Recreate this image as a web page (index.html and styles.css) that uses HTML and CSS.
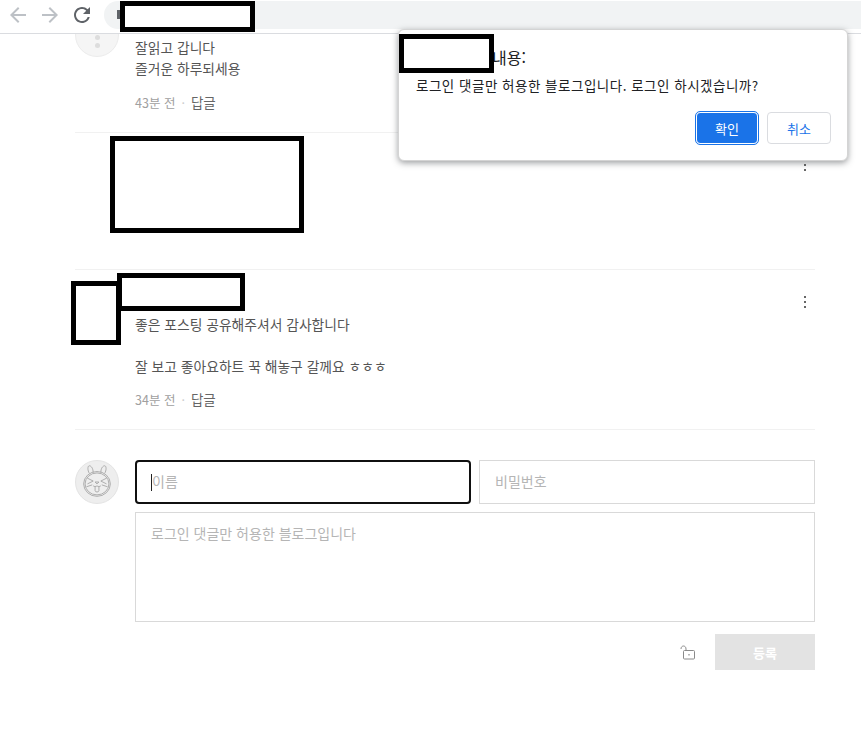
FILE: index.html
```html
<!DOCTYPE html>
<html lang="ko">
<head>
  <meta charset="UTF-8" />
  <title>댓글</title>
  <link rel="stylesheet" href="styles.css">
</head>
<body>
  <header class="toolbar">
    <svg class="nav-icon off" viewBox="0 0 24 24"><path d="M20 11H7.83l5.59-5.59L12 4l-8 8 8 8 1.41-1.41L7.83 13H20v-2z"/></svg>
    <svg class="nav-icon off" viewBox="0 0 24 24"><path d="M4 11h12.17l-5.59-5.59L12 4l8 8-8 8-1.41-1.41L16.17 13H4v-2z"/></svg>
    <svg class="nav-icon" viewBox="0 0 24 24"><path d="M17.65 6.35A7.958 7.958 0 0 0 12 4c-4.42 0-7.99 3.58-7.99 8s3.57 8 7.99 8c3.73 0 6.84-2.55 7.73-6h-2.08A5.99 5.99 0 0 1 12 18c-3.31 0-6-2.69-6-6s2.69-6 6-6c1.66 0 3.14.69 4.22 1.78L13 11h7V4l-2.35 2.35z"/></svg>
    <div class="omnibox"><span class="lock-stub"></span></div>
  </header>

  <main class="page">
    <ul class="comments">
      <li class="comment comment-first">
        <div class="avatar">
          <span class="avatar-dot"></span>
          <span class="avatar-dot"></span>
        </div>
        <div class="comment-body">
          <div class="name"></div>
          <p>잘읽고 갑니다<br>즐거운 하루되세용</p>
          <div class="meta">43분 전<i>·</i><a>답글</a></div>
        </div>
      </li>
      <li class="comment comment-hidden">
        <div class="comment-body"></div>
        <svg class="kebab" viewBox="0 0 4 14"><circle cx="2" cy="2" r="1"/><circle cx="2" cy="7" r="1"/><circle cx="2" cy="12" r="1"/></svg>
      </li>
      <li class="comment">
        <div class="avatar"></div>
        <div class="comment-body">
          <div class="name"></div>
          <p>좋은 포스팅 공유해주셔서 감사합니다<br><br>잘 보고 좋아요하트 꾹 해놓구 갈께요 ㅎㅎㅎ</p>
          <div class="meta">34분 전<i>·</i><a>답글</a></div>
        </div>
        <svg class="kebab" viewBox="0 0 4 14"><circle cx="2" cy="2" r="1"/><circle cx="2" cy="7" r="1"/><circle cx="2" cy="12" r="1"/></svg>
      </li>
    </ul>

    <form class="write">
      <div class="avatar avatar-bunny">
        <svg viewBox="0 0 44 44" fill="none" stroke="#9a9a9a" stroke-width="0.8">
          <path d="M14 13c-2-3-2-8 0-8s4 3 4 7M26 12c0-4 2-7 4-7s2 5 0 8"/>
          <ellipse cx="22" cy="24" rx="14" ry="13"/>
          <ellipse cx="22" cy="24" rx="12.500" ry="11.500"/>
          <path d="M12 18l6 3-6 3M32 18l-6 3 6 3M11 27l6-2M33 27l-6-2"/>
          <path d="M20 22h4l-2 2zM18 26c1 1 3 1 4 0 1 1 3 1 4 0M20 27v4c0 2 4 2 4 0v-4"/>
        </svg>
      </div>
      <div class="fields">
        <div class="field-row">
          <div class="field field-focus"><span class="caret"></span><span class="placeholder">이름</span></div>
          <div class="field"><span class="placeholder">비밀번호</span></div>
        </div>
        <div class="field field-area">로그인 댓글만 허용한 블로그입니다</div>
        <div class="actions">
          <svg class="open-lock" viewBox="0 0 16 16" fill="none" stroke="#8a8a8a" stroke-width="1">
            <rect x="3.500" y="6.500" width="11" height="8.500" rx="1"/>
            <path d="M1 5c0-4 5-4 5 0v1.500"/>
            <path d="M9 10v1.500" stroke-width="1.200"/>
          </svg>
          <button class="submit" type="button">등록</button>
        </div>
      </div>
    </form>
  </main>

  <div class="dialog">
    <div class="dialog-title">내용:</div>
    <div class="dialog-text">로그인 댓글만 허용한 블로그입니다. 로그인 하시겠습니까?</div>
    <div class="dialog-buttons">
      <button class="btn btn-ok" type="button">확인</button>
      <button class="btn btn-cancel" type="button">취소</button>
    </div>
  </div>

  <div class="redact redact-url"></div>
  <div class="redact redact-title"></div>
  <div class="redact redact-comment"></div>
  <div class="redact redact-name"></div>
  <div class="redact redact-avatar"></div>
</body>
</html>
```

FILE: styles.css
```css
* {
  box-sizing: border-box;
}

body {
  margin: 0;
  height: 729px;
  overflow: hidden;
  background: #fff;
  color: #555;
  font-family: "Noto Sans CJK KR", "Noto Sans", sans-serif;
  font-size: 13px;
}

.toolbar {
  position: relative;
  z-index: 1;
  height: 34px;
  display: flex;
  align-items: flex-start;
  gap: 8px;
  padding: 3px 0 0 6px;
  background: #fff;
  border-bottom: 1px solid #dadce0;
}

.nav-icon {
  width: 24px;
  height: 24px;
  fill: #5f6368;
  flex: none;
}

.nav-icon.off { fill: #bdc1c6 }

.omnibox {
  flex: 1;
  height: 28px;
  margin: -2px 0 0 2px;
  padding: 9px 0 0 13px;
  background: #f1f3f4;
  border-radius: 14px 0 0 14px;
}

.lock-stub {
  display: block;
  width: 6px;
  height: 9px;
  background: #5f6368;
}

.page {
  padding: 0 46px 0 75px;
}

.comments {
  list-style: none;
  margin: -40px 0 0;
  padding: 0;
}

.comment {
  display: flex;
  padding: 19px 0 20px;
  border-bottom: 1px solid #f1f1f1;
}

.comment-hidden {
  height: 137px;
}

.avatar {
  flex: none;
  width: 44px;
  height: 44px;
  margin-right: 16px;
  border-radius: 50%;
  background: #f5f5f5;
  border: 1px solid #ececec;
  display: flex;
  flex-direction: column;
  align-items: center;
  justify-content: flex-end;
  gap: 3px;
  padding-bottom: 8px;
}

.avatar-dot {
  width: 5px;
  height: 5px;
  border-radius: 50%;
  background: #ddd;
}

.comment-body {
  flex: 1;
}

.name {
  height: 20px;
  margin-top: 5px;
}

.comment p {
  margin: 0;
  font-size: 13.800px;
  line-height: 21px;
  color: #555;
}

.meta {
  height: 20px;
  margin-top: 12px;
  font-size: 12.500px;
  line-height: 20px;
  color: #a0a0a0;
}

.comment-first .name { height: 19px }
.comment-first .meta { margin-top: 13px; height: 19px }
.comment-first { padding-bottom: 21px }

.meta i {
  margin: 0 6px;
  font-style: normal;
  color: #ccc;
}

.meta a {
  font-size: 13.500px;
  color: #666;
}

.kebab {
  flex: none;
  width: 4px;
  height: 14px;
  margin: 6px 8px 0 0;
  fill: #333;
}

.write {
  display: flex;
  margin-top: 30px;
}

.avatar-bunny {
  display: block;
  padding: 0;
  background: #eee;
  border-color: #e4e4e4;
}

.avatar-bunny svg {
  display: block;
  width: 42px;
  height: 42px;
}

.fields {
  flex: 1;
  display: flex;
  flex-direction: column;
  gap: 8px;
}

.field-row {
  display: flex;
  gap: 8px;
}

.field {
  flex: 1;
  height: 44px;
  padding: 0 15px;
  display: flex;
  align-items: center;
  border: 1px solid #d9d9d9;
  color: #b5b5b5;
  font-size: 14px;
}

.placeholder {
  margin-top: -2px;
}

.field-focus {
  border: 2px solid #101010;
  border-radius: 4px;
  padding: 0 14px;
}

.caret {
  width: 1px;
  height: 17px;
  background: #222;
}

.field-area {
  flex: none;
  height: 110px;
  align-items: flex-start;
  padding-top: 10px;
}

.actions {
  display: flex;
  justify-content: flex-end;
  align-items: center;
  gap: 19px;
  margin-top: 4px;
}

.open-lock {
  width: 16px;
  height: 16px;
}

.submit {
  width: 100px;
  height: 36px;
  border: 0;
  background: #e3e3e3;
  color: #fff;
  font: inherit;
  font-weight: 700;
}

.dialog {
  position: absolute;
  z-index: 2;
  left: 398px;
  top: 29px;
  width: 450px;
  height: 132px;
  padding: 16px 16px 0 17px;
  background: #fff;
  border: 1px solid #d4d4d4;
  border-radius: 6px;
  box-shadow: 0 2px 6px rgba(60, 64, 67, 0.5);
  color: #202124;
}

.dialog-title {
  padding-left: 76px;
  font-size: 16px;
  line-height: 22px;
}

.dialog-text {
  margin-top: 7px;
  font-size: 13.500px;
  line-height: 20px;
  letter-spacing: 0.500px;
  white-space: nowrap;
}

.dialog-buttons {
  display: flex;
  justify-content: flex-end;
  gap: 8px;
  margin-top: 17px;
}

.btn {
  width: 64px;
  height: 32px;
  border-radius: 4px;
  font: inherit;
  font-size: 13px;
}

.btn-ok {
  background: #1a73e8;
  color: #fff;
  border: 1px solid #fff;
  outline: 1.500px solid #1a73e8;
  width: 62px;
  margin-right: 1px;
}

.btn-cancel {
  background: #fff;
  color: #1a73e8;
  border: 1px solid #dadce0;
}

.redact {
  position: absolute;
  z-index: 3;
  background: #fff;
  border: 5px solid #000;
}

.redact-url { left: 120px; top: 1px; width: 135px; height: 31px }
.redact-title { left: 399px; top: 34px; width: 95px; height: 39px }
.redact-comment { left: 110px; top: 136px; width: 194px; height: 97px }
.redact-name { left: 117px; top: 273px; width: 128px; height: 38px }
.redact-avatar { left: 71px; top: 281px; width: 50px; height: 64px }
```
